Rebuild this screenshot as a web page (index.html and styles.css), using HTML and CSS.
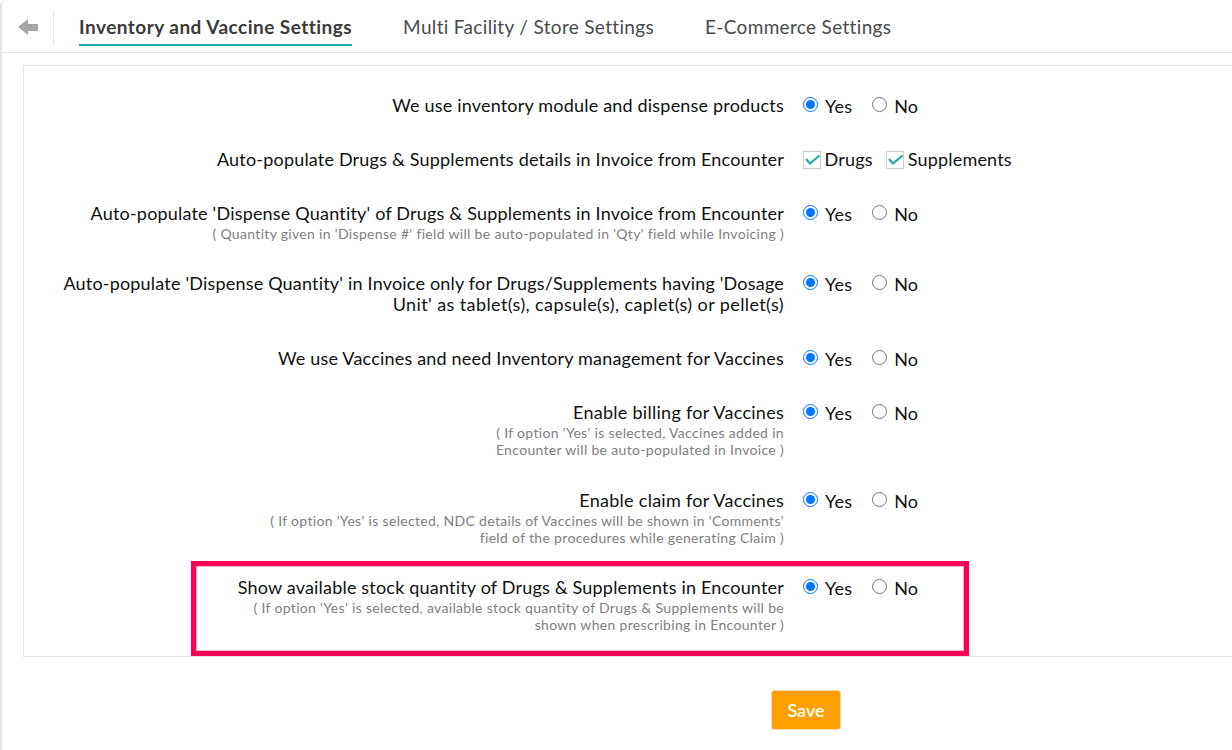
FILE: index.html
```html
<!DOCTYPE html>
<html lang="en">
<head>
<meta charset="utf-8">
<title>Inventory and Vaccine Settings</title>
<link rel="stylesheet" href="styles.css">
</head>
<body>
<div class="page">
  <header class="tabs">
    <a class="back" aria-label="Back">
      <svg width="20" height="16" viewBox="0 0 20 16"><path d="M0 8 L10 0 V5 H20 V12 H10 V16 Z" fill="#a6a6a6"/></svg>
    </a>
    <nav class="tablist">
      <a class="tab active">Inventory and Vaccine Settings</a>
      <a class="tab">Multi Facility / Store Settings</a>
      <a class="tab">E-Commerce Settings</a>
    </nav>
  </header>
  <section class="panel">
    <div class="row">
      <div class="label"><div class="title">We use inventory module and dispense products</div></div>
      <div class="opts">
        <label class="opt"><input type="radio" name="r1" checked><span>Yes</span></label>
        <label class="opt"><input type="radio" name="r1"><span>No</span></label>
      </div>
    </div>
    <div class="row">
      <div class="label"><div class="title">Auto-populate Drugs &amp; Supplements details in Invoice from Encounter</div></div>
      <div class="opts checks">
        <label class="chk"><span class="box"><svg width="16" height="16" viewBox="0 0 16 16"><path d="M2 7 L6 11.500 L15.500 3.500" fill="none" stroke="#26a9ad" stroke-width="2.200"/></svg></span><span>Drugs</span></label>
        <label class="chk"><span class="box"><svg width="16" height="16" viewBox="0 0 16 16"><path d="M2 7 L6 11.500 L15.500 3.500" fill="none" stroke="#26a9ad" stroke-width="2.200"/></svg></span><span>Supplements</span></label>
      </div>
    </div>
    <div class="row noted">
      <div class="label">
        <div class="title">Auto-populate 'Dispense Quantity' of Drugs &amp; Supplements in Invoice from Encounter</div>
        <div class="note">( Quantity given in 'Dispense #' field will be auto-populated in 'Qty' field while Invoicing )</div>
      </div>
      <div class="opts">
        <label class="opt"><input type="radio" name="r3" checked><span>Yes</span></label>
        <label class="opt"><input type="radio" name="r3"><span>No</span></label>
      </div>
    </div>
    <div class="row">
      <div class="label"><div class="title">Auto-populate 'Dispense Quantity' in Invoice only for Drugs/Supplements having 'Dosage <span class="wide">Unit' as tablet(s), capsule(s), caplet(s) or pellet(s)</span></div></div>
      <div class="opts">
        <label class="opt"><input type="radio" name="r4" checked><span>Yes</span></label>
        <label class="opt"><input type="radio" name="r4"><span>No</span></label>
      </div>
    </div>
    <div class="row">
      <div class="label"><div class="title">We use Vaccines and need Inventory management for Vaccines</div></div>
      <div class="opts">
        <label class="opt"><input type="radio" name="r5" checked><span>Yes</span></label>
        <label class="opt"><input type="radio" name="r5"><span>No</span></label>
      </div>
    </div>
    <div class="row noted">
      <div class="label">
        <div class="title short">Enable billing for Vaccines</div>
        <div class="note">( If option 'Yes' is selected, Vaccines added in<br>Encounter will be auto-populated in Invoice )</div>
      </div>
      <div class="opts">
        <label class="opt"><input type="radio" name="r6" checked><span>Yes</span></label>
        <label class="opt"><input type="radio" name="r6"><span>No</span></label>
      </div>
    </div>
    <div class="row noted">
      <div class="label">
        <div class="title short">Enable claim for Vaccines</div>
        <div class="note">( If option 'Yes' is selected, NDC details of Vaccines will be shown in 'Comments'<br>field of the procedures while generating Claim )</div>
      </div>
      <div class="opts">
        <label class="opt"><input type="radio" name="r7" checked><span>Yes</span></label>
        <label class="opt"><input type="radio" name="r7"><span>No</span></label>
      </div>
    </div>
    <div class="row noted">
      <div class="label">
        <div class="title">Show available stock quantity of Drugs &amp; Supplements in Encounter</div>
        <div class="note">( If option 'Yes' is selected, available stock quantity of Drugs &amp; Supplements will be<br>shown when prescribing in Encounter )</div>
      </div>
      <div class="opts">
        <label class="opt"><input type="radio" name="r8" checked><span>Yes</span></label>
        <label class="opt"><input type="radio" name="r8"><span>No</span></label>
      </div>
    </div>
    <div class="highlight"></div>
  </section>
  <div class="actions"><button class="save" type="button">Save</button></div>
</div>
</body>
</html>
```
FILE: styles.css
```css
* { box-sizing: border-box; }
html, body { margin: 0; height: 100%; overflow: hidden; background: #fff; }
body { font-family: "Lato", sans-serif; color: #111; }
.page {
  height: 750px;
  border-left: 2px solid #e3e3ea;
  border-top-left-radius: 6px;
}
.tabs {
  display: flex;
  align-items: flex-start;
  height: 53px;
  border-bottom: 1px solid #e6e6e6;
  padding-top: 10px;
}
.back {
  display: flex;
  align-items: center;
  width: 52px;
  height: 34px;
  padding-left: 16px;
  border-right: 1px solid #e3e3e3;
}
.tablist { display: flex; gap: 51px; margin-left: 25px; }
.tab {
  display: block;
  height: 36px;
  padding-top: 4px;
  font-size: 19px;
  line-height: 25px;
  color: #4a4a4a;
  letter-spacing: 0.33px;
}
.tab.active {
  color: #3a3a3a;
  font-weight: 700;
  letter-spacing: 0.47px;
  border-bottom: 2px solid #26a9ad;
}
.panel {
  position: relative;
  margin: 12px 0 0 21px;
  height: 592px;
  border: 1px solid #e4e4e4;
  border-right: 0;
  padding-top: 28.8px;
}
.row { display: flex; padding-bottom: 33px; }
.row.noted { padding-bottom: 31.5px; }
.label { width: 760px; text-align: right; }
.title { font-size: 18px; line-height: 21px; color: #111; letter-spacing: 0.19px; }
.title.short { letter-spacing: 0.27px; }
.wide { letter-spacing: 0.4px; }
.note { margin-top: 1px; font-size: 14px; line-height: 17px; color: #808080; letter-spacing: 0.32px; }
.opts { display: flex; margin-left: 19px; gap: 20px; height: 21px; font-size: 18px; line-height: 21px; letter-spacing: 0.19px; }
.opt { display: flex; align-items: flex-start; gap: 7px; }
.opt span { margin-top: 1px; }
.opt input { width: 15px; height: 15px; margin: 2px 0 0; accent-color: #0075ff; }
.checks { gap: 13.500px; }
.chk { display: flex; gap: 3.500px; }
.box { width: 18px; height: 18px; margin-top: 2px; border: 1px solid #cfcfcf; display: block; }
.box svg { display: block; }
.highlight {
  position: absolute;
  left: 167px;
  top: 495px;
  width: 778px;
  height: 95px;
  border: 5px solid #ff0055;
  box-shadow: inset 0 0 0 1px rgba(255, 0, 85, 0.3);
  pointer-events: none;
}
.actions { margin: 33px 0 0 769px; }
.save {
  display: block;
  width: 70px;
  height: 40px;
  padding: 0;
  background: #ffa000;
  border: 1px solid #f0dcb4;
  border-radius: 3px;
  color: #fff;
  font: 600 18px "Lato", sans-serif;
}
```
